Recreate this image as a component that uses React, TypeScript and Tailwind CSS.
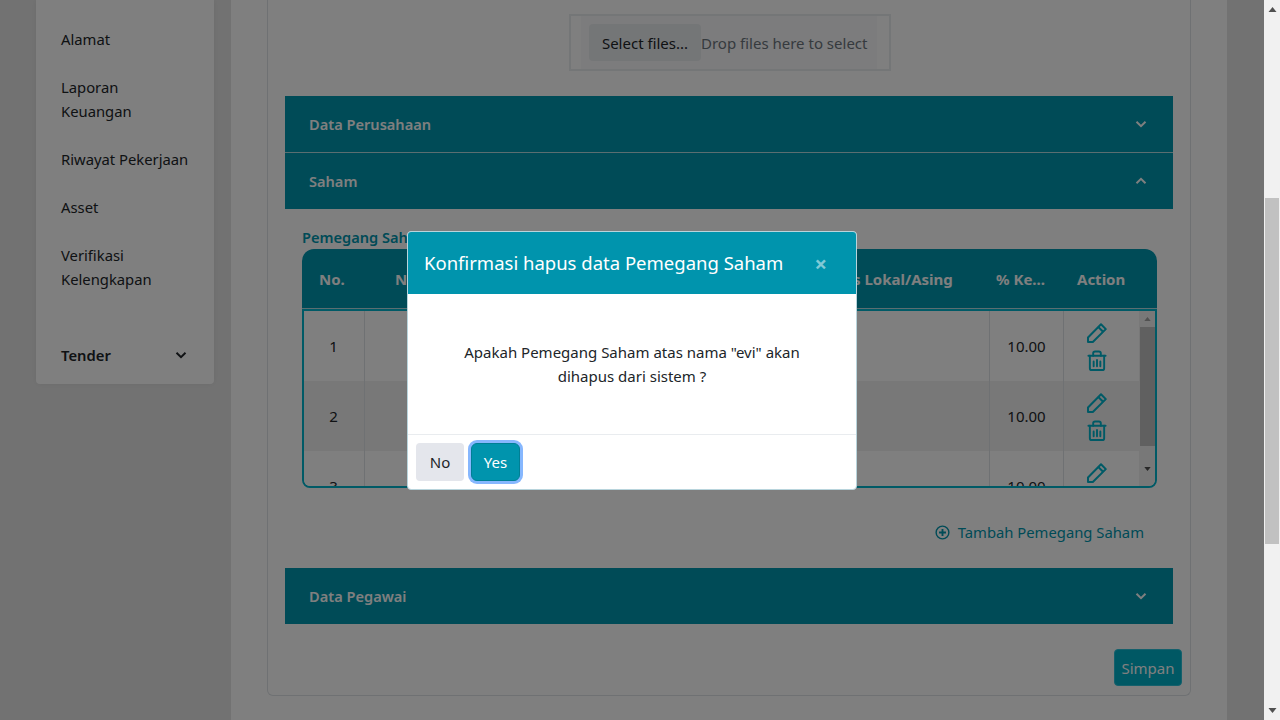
import React from "react";

const font = { fontFamily: '"Noto Sans", sans-serif' };

function Chevron({ up, cls }: { up?: boolean; cls: string }) {
  return (
    <svg viewBox="0 0 12 8" className={cls} fill="none" stroke="currentColor" strokeWidth="2">
      <path d={up ? "M1.5 6.2 6 1.8l4.5 4.4" : "M1.5 1.8 6 6.2l4.5-4.4"} />
    </svg>
  );
}

function Pencil() {
  return (
    <svg viewBox="0 0 20 20" className="w-5 h-5 text-[#00b4cc]" fill="none" stroke="currentColor" strokeWidth="2" strokeLinejoin="round">
      <path d="M1 14.5 14 1.3l4.8 4.8L5.8 19H1z" />
      <path d="m11.3 4 4.8 4.8" />
    </svg>
  );
}

function Trash() {
  return (
    <svg viewBox="0 0 20 22" className="w-5 h-[21px] text-[#00b4cc]" fill="none" stroke="currentColor" strokeWidth="2" strokeLinejoin="round" strokeLinecap="round">
      <path d="M1 6h18" />
      <path d="M6 6V3.500Q6 1.500 8 1.500h4q2 0 2 2V6" />
      <path d="M2.500 6v13q0 2 2 2h11q2 0 2-2V6" />
      <path d="M6.500 12v5M10 10.500v6.500M13.500 12v5" />
    </svg>
  );
}

function Accordion({ title, up, tall }: { title: string; up?: boolean; tall?: boolean }) {
  return (
    <div className={`${tall ? "h-[57px] border-b border-b-[#b5dce3]" : "h-[56px]"} bg-[#0096ae] flex items-center justify-between pl-6 pr-[26px] text-white font-semibold text-[14.6px]`}>
      <span>{title}</span>
      <Chevron up={up} cls="w-3 h-2" />
    </div>
  );
}

function Row({ n, alt }: { n: number; alt?: boolean }) {
  return (
    <div className={`grid grid-cols-[61px_625px_74px_75px] h-[70px] shrink-0 text-[#212529] ${alt ? "bg-[#f0f0f0]" : "bg-white"}`}>
      <div className="border-r border-[#dee2e6] flex items-center justify-center pr-[1px]">{n}</div>
      <div className="border-r border-[#dee2e6]" />
      <div className="border-r border-[#dee2e6] flex items-center justify-center">10.00</div>
      <div className="flex flex-col items-center justify-center gap-[7px] pr-[10px] pt-[2px]">
        <Pencil />
        <Trash />
      </div>
    </div>
  );
}

function Arrow({ up, cls }: { up?: boolean; cls: string }) {
  return (
    <svg viewBox="0 0 8 5" className={cls} fill="currentColor">
      <path d={up ? "M4 0 8 5H0z" : "M0 0h8L4 5z"} />
    </svg>
  );
}

export default function App() {
  return (
    <div className="flex h-screen w-[1280px] overflow-hidden text-[15px] leading-6" style={font}>
      <div className="relative w-[1264px] h-full overflow-hidden bg-[#e5e5e5] flex">
        {/* sidebar */}
        <div className="w-[231px] shrink-0 pl-9 pr-[17px]">
          <div className="h-[384px] bg-white rounded-b shadow-[0_0_6px_rgba(0,0,0,0.06)] pl-[25px] pr-6 pt-[15px] text-[14.8px] text-[#212529] whitespace-nowrap">
            <div className="flex flex-col">
              <div className="py-3">Alamat</div>
              <div className="py-3">Laporan<br />Keuangan</div>
              <div className="py-3">Riwayat Pekerjaan</div>
              <div className="py-3">Asset</div>
              <div className="py-3">Verifikasi<br />Kelengkapan</div>
            </div>
            <div className="mt-10 flex items-center justify-between pr-[3px] font-semibold">
              <span>Tender</span>
              <Chevron cls="w-3 h-2" />
            </div>
          </div>
        </div>

        {/* main */}
        <div className="w-[996px] shrink-0 h-full bg-white px-9">
          <div className="h-[696px] border border-t-0 border-[#dee2e6] rounded-b-md px-[17px] flex flex-col">
            <div className="pt-[14px] flex justify-center">
              <div className="ml-[2px] w-[322px] h-[57px] border-2 border-[#e9ecef] pl-[10px] pr-[12px]">
                <div className="h-full bg-[#f8f9fa] flex items-center pl-[8px]">
                  <div className="w-[112px] h-[37px] rounded bg-[#e9ecef] flex items-center justify-center text-[#212529] whitespace-nowrap shrink-0">Select files...</div>
                  <span className="text-[#6c757d] whitespace-nowrap">Drop files here to select</span>
                </div>
              </div>
            </div>

            <div className="mt-[25px]">
              <Accordion title="Data Perusahaan" tall />
              <Accordion title="Saham" up />
            </div>

            <div className="pl-[17px] pr-[16px] pt-4">
              <div className="text-[#0096ae] font-semibold text-[14.6px] h-6">Pemegang Saham</div>
              <div className="h-[60px] rounded-t-xl bg-[#0096ae] border-b border-b-[#b5dce3] text-white font-bold text-[15px] grid grid-cols-[93px_418px_183px_81px_1fr] items-center whitespace-nowrap">
                <span className="pl-[17px]">No.</span>
                <span>Nama Pemegang Saham</span>
                <span>Status Lokal/Asing</span>
                <span>% Ke...</span>
                <span>Action</span>
              </div>
              <div className="h-[179px] border-2 border-[#00b4cc] rounded-b-lg overflow-hidden flex">
                <div className="w-[835px] flex flex-col overflow-hidden">
                  <Row n={1} />
                  <Row n={2} alt />
                  <Row n={3} />
                </div>
                <div className="w-4 bg-[#f1f1f1] flex flex-col items-center">
                  <div className="h-[16px] flex items-center justify-center text-[#a3a3a3]">
                    <Arrow up cls="w-[7px] h-[4px]" />
                  </div>
                  <div className="w-[15px] h-[119px] bg-[#c1c1c1]" />
                  <div className="flex-1 flex items-center justify-center text-[#505050] pt-[6px]">
                    <Arrow cls="w-[7px] h-[4px]" />
                  </div>
                </div>
              </div>
            </div>

            <div className="mt-[32px] h-6 pr-[29px] flex items-center justify-end gap-[8px] text-[14.8px] text-[#0096ae]">
              <svg viewBox="0 0 16 16" className="w-[15px] h-[15px]" fill="none" stroke="currentColor" strokeWidth="1.500">
                <circle cx="8" cy="8" r="6.800" />
                <path d="M8 4.300v7.400M4.300 8h7.400" strokeWidth="2" />
              </svg>
              <span className="whitespace-nowrap">Tambah Pemegang Saham</span>
            </div>

            <div className="mt-6">
              <Accordion title="Data Pegawai" />
            </div>

            <div className="mt-[25px] -mr-[9px] flex justify-end">
              <div className="h-[37px] w-[68px] rounded bg-[#00b0c8] border border-[#2ac0d8] text-white flex items-center justify-center">Simpan</div>
            </div>
          </div>
        </div>

        {/* backdrop and dialog */}
        <div className="absolute inset-0 bg-black/50 flex items-center justify-center">
          <div className="w-[450px] h-[259px] bg-white rounded border border-[#b8d4dc] flex flex-col overflow-hidden">
            <div className="h-[62px] shrink-0 bg-[#0094ad] pl-4 pr-[29px] flex items-center justify-between text-white">
              <span className="text-[18.500px] whitespace-nowrap">Konfirmasi hapus data Pemegang Saham</span>
              <span className="text-[22px] font-bold leading-none text-[#80c9d6]">×</span>
            </div>
            <div className="h-[140px] shrink-0 flex items-center justify-center text-center text-[#212529] whitespace-nowrap">
              <p>Apakah Pemegang Saham atas nama "evi" akan<br />dihapus dari sistem ?</p>
            </div>
            <div className="flex-1 border-t border-[#e9ecef] pl-2 flex items-center gap-[7px]">
              <div className="w-12 h-[38px] pt-[1px] rounded bg-[#e4e6ec] flex items-center justify-center text-[#212529]">No</div>
              <div className="w-[49px] h-[38px] pt-[1px] rounded-md bg-[#0094ad] ring-[3px] ring-[#86b7fe] border border-[#007f95] flex items-center justify-center text-white">Yes</div>
            </div>
          </div>
        </div>
      </div>

      {/* page scrollbar */}
      <div className="w-4 h-full bg-[#f1f1f1] flex flex-col items-center">
        <div className="h-[198px] pt-[7px] text-[#505050]">
          <Arrow up cls="w-[9px] h-[5px]" />
        </div>
        <div className="w-[14px] h-[346px] bg-[#c1c1c1]" />
        <div className="flex-1 flex items-end pb-[7px] text-[#505050]">
          <Arrow cls="w-[9px] h-[5px]" />
        </div>
      </div>
    </div>
  );
}
